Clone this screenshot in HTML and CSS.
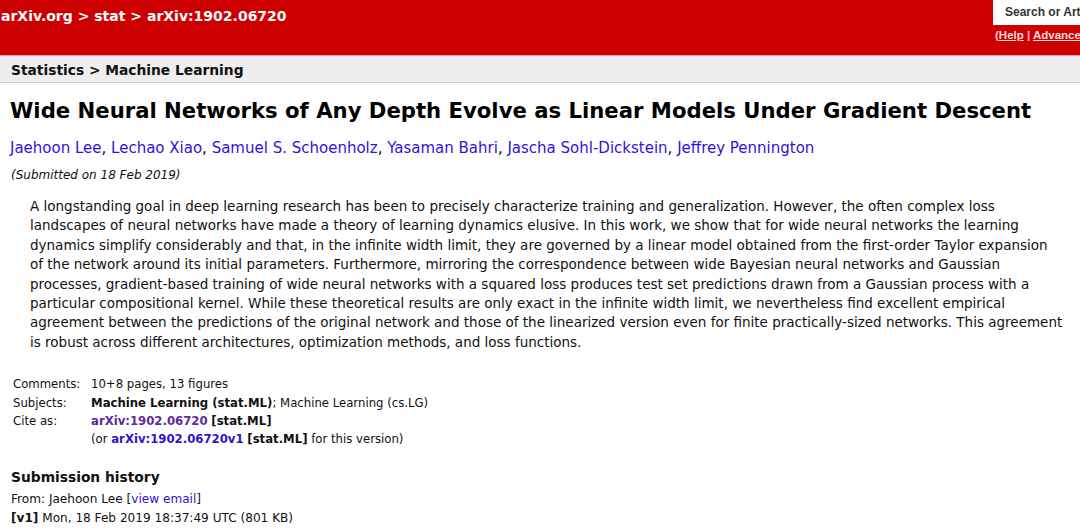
FILE: index.html
```html
<!DOCTYPE html>
<html lang="en">
<head>
<meta charset="utf-8">
<title>[1902.06720] Wide Neural Networks of Any Depth Evolve as Linear Models Under Gradient Descent</title>
<link rel="stylesheet" href="styles.css">
</head>
<body>
<header class="top">
  <div class="crumbs"><a href="#">arXiv.org</a> &gt; <a href="#">stat</a> &gt; arXiv:1902.06720</div>
  <div class="search">
    <div class="search-box">Search or Article ID</div>
    <div class="search-links">(<a href="#">Help</a> | <a href="#">Advanced search</a>)</div>
  </div>
</header>
<div class="subheader">Statistics &gt; Machine Learning</div>
<main class="content">
  <h1 class="title">Wide Neural Networks of Any Depth Evolve as Linear Models Under Gradient Descent</h1>
  <div class="authors"><a href="#">Jaehoon Lee</a>, <a href="#">Lechao Xiao</a>, <a href="#">Samuel S. Schoenholz</a>, <a href="#">Yasaman Bahri</a>, <a href="#">Jascha Sohl-Dickstein</a>, <a href="#">Jeffrey Pennington</a></div>
  <div class="dateline">(Submitted on 18 Feb 2019)</div>
  <blockquote class="abstract">A longstanding goal in deep learning research has been to precisely characterize training and generalization. However, the often complex loss<br>landscapes of neural networks have made a theory of learning dynamics elusive. In this work, we show that for wide neural networks the learning<br>dynamics simplify considerably and that, in the infinite width limit, they are governed by a linear model obtained from the first-order Taylor expansion<br>of the network around its initial parameters. Furthermore, mirroring the correspondence between wide Bayesian neural networks and Gaussian<br>processes, gradient-based training of wide neural networks with a squared loss produces test set predictions drawn from a Gaussian process with a<br>particular compositional kernel. While these theoretical results are only exact in the infinite width limit, we nevertheless find excellent empirical<br>agreement between the predictions of the original network and those of the linearized version even for finite practically-sized networks. This agreement<br>is robust across different architectures, optimization methods, and loss functions.</blockquote>
  <table class="meta">
    <tr><td class="label">Comments:</td><td>10+8 pages, 13 figures</td></tr>
    <tr><td class="label">Subjects:</td><td><span class="primary">Machine Learning (stat.ML)</span>; Machine Learning (cs.LG)</td></tr>
    <tr><td class="label">Cite as:</td><td><a class="visited" href="#">arXiv:1902.06720</a> <b>[stat.ML]</b></td></tr>
    <tr><td class="label"></td><td>(or <a class="link" href="#">arXiv:1902.06720v1</a> <b>[stat.ML]</b> for this version)</td></tr>
  </table>
  <section class="history">
    <h2>Submission history</h2>
    <div>From: Jaehoon Lee [<a href="#">view email</a>]</div>
    <div><b>[v1]</b> Mon, 18 Feb 2019 18:37:49 UTC (801 KB)</div>
  </section>
</main>
</body>
</html>
```
FILE: styles.css
```css
html, body {
  margin: 0;
  padding: 0;
  background: #ffffff;
  overflow: hidden;
}
body {
  font-family: "DejaVu Sans", "Liberation Sans", sans-serif;
  color: #000;
  width: 1080px;
}
a { text-decoration: none; }

.top {
  background: #cc0000;
  height: 55px;
  display: flex;
  justify-content: space-between;
  align-items: flex-start;
  overflow: hidden;
}
.crumbs {
  color: #fff;
  font-weight: bold;
  font-size: 14px;
  padding: 7px 0 0 1px;
  line-height: 18px;
  white-space: nowrap;
}
.crumbs a { color: #fff; }

.search {
  flex: 0 0 200px;
  margin-right: -113px;
  display: flex;
  flex-direction: column;
}
.search-box {
  background: #fff;
  height: 25px;
  box-sizing: border-box;
  padding: 5px 0 0 12px;
  font-family: "Liberation Sans", Arial, sans-serif;
  font-size: 12px;
  font-weight: bold;
  color: #333;
  line-height: 15px;
  white-space: nowrap;
}
.search-links {
  color: #fcc;
  font-family: "Liberation Sans", Arial, sans-serif;
  font-size: 11.5px;
  font-weight: bold;
  padding: 3px 0 0 2px;
  line-height: 15px;
  white-space: nowrap;
}
.search-links a { color: #fdd; text-decoration: underline; }

.subheader {
  background: #eeeeee;
  border-top: 1px solid #e3a0a0;
  border-bottom: 1px solid #cccccc;
  height: 28px;
  box-sizing: border-box;
  padding: 4px 0 0 11px;
  font-weight: bold;
  font-size: 13.8px;
  line-height: 20px;
  color: #111;
}

.content {
  padding: 0 10px;
}
.title {
  font-size: 21.2px;
  font-weight: bold;
  margin: 13px 0 0 0;
  line-height: 30px;
  white-space: nowrap;
}
.authors {
  margin-top: 12px;
  font-size: 15px;
  line-height: 20px;
}
.authors a { color: #3311dd; }
.dateline {
  margin-top: 9px;
  font-size: 12px;
  font-style: italic;
  line-height: 16px;
  padding-left: 1px;
  color: #111;
}
.abstract {
  margin: 14px 0 0 20px;
  font-size: 13.5px;
  line-height: 19.4px;
  white-space: nowrap;
  color: #111;
}

.meta {
  margin-top: 23px;
  border-collapse: collapse;
  font-size: 11.7px;
  color: #111;
}
.meta td {
  padding: 0;
  line-height: 18.3px;
  vertical-align: top;
  white-space: nowrap;
}
.meta .label { width: 78px; padding-left: 3px; }
.meta .primary { font-weight: bold; }
.meta a.visited { color: #5c2a9d; font-weight: bold; }
.meta a.link { color: #3311cc; font-weight: bold; }

.history {
  margin-top: 19px;
  padding-left: 1px;
  font-size: 12.1px;
  line-height: 19px;
  color: #111;
}
.history h2 {
  font-size: 13.8px;
  font-weight: bold;
  margin: 0 0 3px 0;
  line-height: 20px;
}
.history a { color: #3311cc; }
```
